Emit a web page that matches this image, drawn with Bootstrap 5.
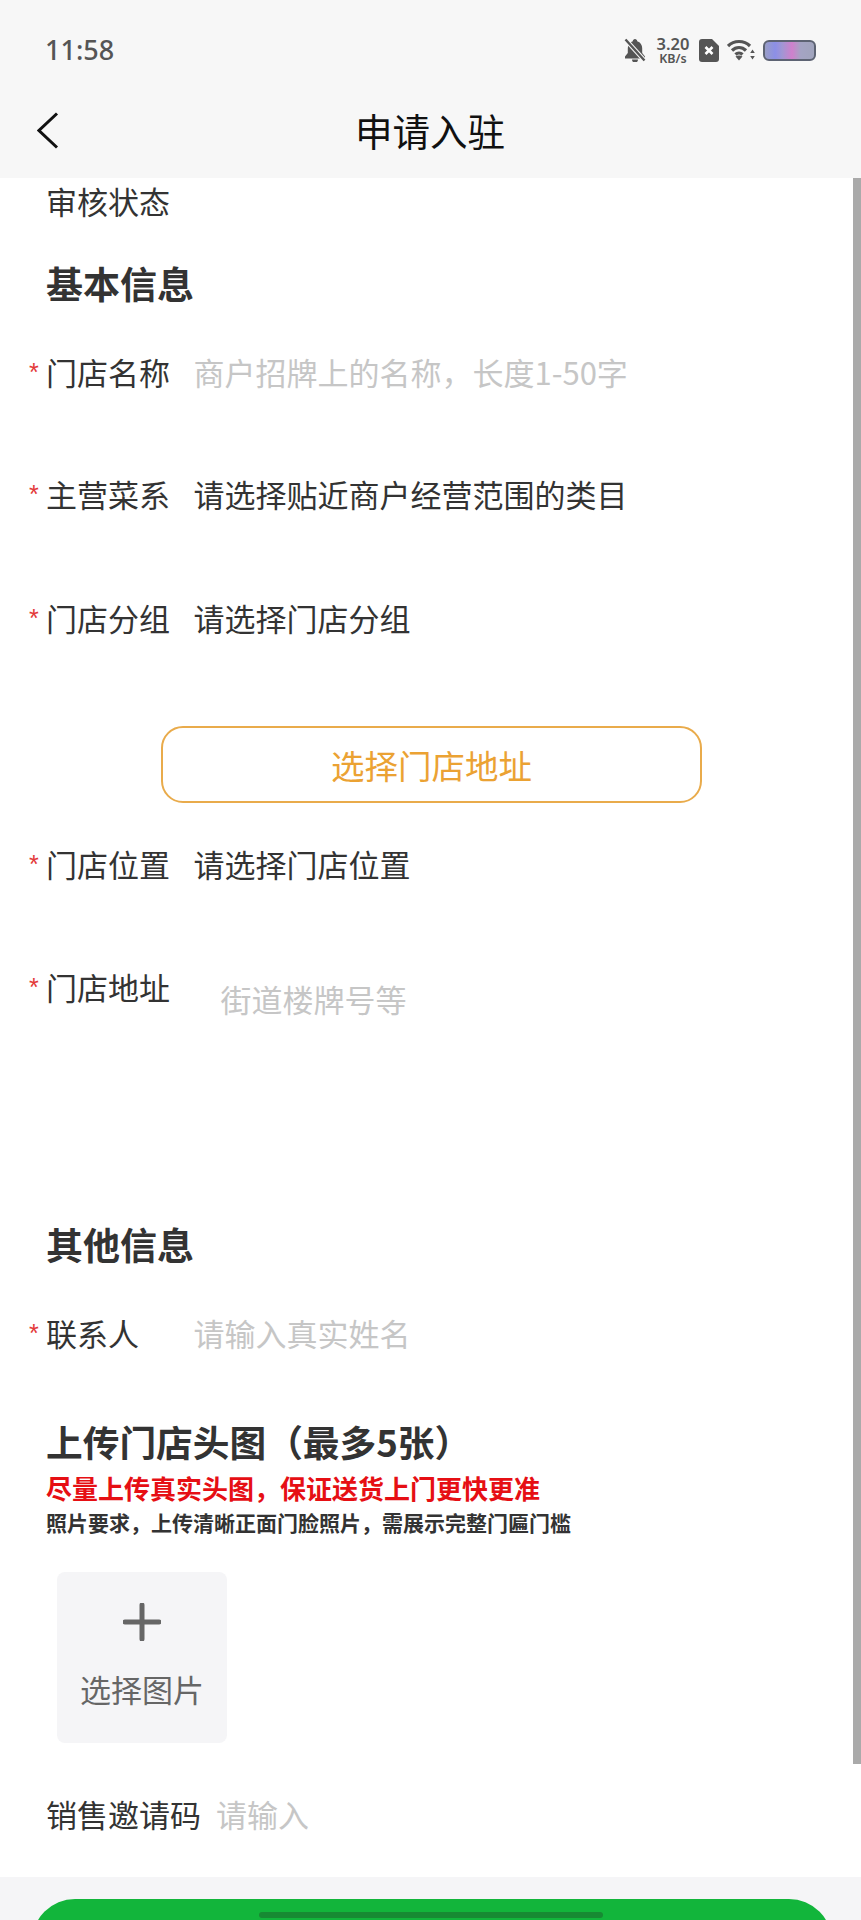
<!DOCTYPE html>
<html lang="zh">
<head>
<meta charset="utf-8">
<link href="https://cdn.jsdelivr.net/npm/bootstrap@5.3.0/dist/css/bootstrap.min.css" rel="stylesheet">
<style>
html,body{margin:0;background:#fff}
.screen{width:861px;height:1920px;position:relative;overflow:hidden;background:#fff;font-family:"Noto Sans CJK SC","Liberation Sans",sans-serif;color:#333;font-size:31px;line-height:40px}
.top-area{height:178px;background:#f7f7f7}
.status{height:100px;padding:0 45px 0 45px}
.clock{font-family:"Noto Sans","Liberation Sans",sans-serif;font-size:27px;font-weight:500;color:#555;line-height:100px}
.speed{font-family:"Noto Sans","Liberation Sans",sans-serif;color:#555;font-weight:600;text-align:center;width:38px;margin:0 7px}
.speed b{display:block;font-size:16.500px;line-height:17px;font-weight:600}
.speed i{display:block;font-style:normal;font-size:12.500px;line-height:13px}
.nav-line{height:60px;padding-left:37px;position:relative}
.page-title{font-size:37.500px;color:#111;line-height:56px;width:100%;text-align:center;margin-left:-41px}
.sbar{position:absolute;left:853px;top:178px;width:8px;height:1586px;background:#aaa}
.h-line{padding-left:46px;height:44px;font-size:37px;font-weight:700;color:#333;line-height:42px}
.h-mid{font-weight:600;font-size:36.700px;line-height:40px}
.f-row{height:44px;padding-left:29px;display:flex;white-space:nowrap}
.star{width:17px;color:#e33a3a;font-family:"Liberation Sans",sans-serif;font-size:25px;line-height:40px;flex:none}
.lbl{width:147.500px;flex:none}
.ph{color:#c6c6c6}
.pick-btn{margin-left:161px;width:541px;height:77px;border:2px solid #e9ab4b;border-radius:22px;color:#eba233;line-height:74px;font-size:33.500px;text-align:center}
.red-note{padding-left:46px;height:30px;font-size:26px;font-weight:700;color:#e60f14;line-height:26px;white-space:nowrap}
.blk-note{padding-left:46px;height:30px;font-size:21px;font-weight:600;color:#333;line-height:26px;white-space:nowrap}
.tile{margin-left:57px;width:170px;height:171px;background:#f5f5f7;border-radius:8px;color:#666;padding-bottom:4px}
.foot{height:43px;background:#f5f5f7;padding:22px 29px 0 32px;position:relative}
.go{height:60px;background:#12b53b;border-radius:43px 43px 0 0}
.home-bar{position:absolute;left:259px;top:35px;width:344px;height:6px;border-radius:3px;background:#178a33}
.mt3x{margin-top:3px}.mt37{margin-top:37px}.mt46{margin-top:46px}.mt78{margin-top:78px}.mt80{margin-top:80px}.mt84{margin-top:84px}.mt41{margin-top:41px}.mt79{margin-top:79px}.mt201{margin-top:201px}.mt64{margin-top:64px}.mt10{margin-top:10px}.mt4x{margin-top:4px}.mt33{margin-top:33px}.mt51{margin-top:51px}.mt39{margin-top:39px}
.addr{height:55px}
.addr-val{padding:12px 0 0 27px}
.tile-text{margin-top:28px}
.lbl-wide{width:170px;flex:none}
</style>
</head>
<body>
<div class="screen">
  <div class="top-area">
    <div class="status d-flex align-items-center justify-content-between">
      <span class="clock">11:58</span>
      <div class="d-flex align-items-center">
        <svg width="24" height="24" viewBox="0 0 24 24"><path d="M12 1c-1.200 0-2.200 1-2.200 2.200-3.300 1-5 3.800-5 7V15L2 18.500V20.500h20v-2L19.200 15v-4.800c0-3.200-1.700-6-5-7C14.200 2 13.200 1 12 1zM9 21.500h6a3 3 0 0 1-6 0z" fill="#555"/><path d="M2 1l20 22" stroke="#f7f7f7" stroke-width="4.500"/><path d="M2.500 1.500l19 21" stroke="#555" stroke-width="2.400"/></svg>
        <div class="speed"><b>3.20</b><i>KB/s</i></div>
        <svg width="20" height="23" viewBox="0 0 20 23"><path d="M3 0h10l7 7v13a3 3 0 0 1-3 3H3a3 3 0 0 1-3-3V3a3 3 0 0 1 3-3z" fill="#555"/><path d="M6.500 8l7 7M13.500 8l-7 7" stroke="#fff" stroke-width="2.600"/></svg>
        <svg class="ms-2" width="28" height="22" viewBox="0 0 28 22" fill="none" stroke="#555" stroke-width="3.200"><path d="M1 7c6-6 16-6 22 0"/><path d="M5 11.500c4-4 10-4 14 0"/><path d="M8.500 15.500c2-2 5-2 7 0"/><path d="M12 21.500l-3.500-4c2.300-1.500 4.700-1.500 7 0z" fill="#555" stroke="none"/><path d="M25.500 10.500l-2.300 3.500h4.600zM25.500 20.500l-2.300-3.500h4.600z" fill="#555" stroke="none"/></svg>
        <svg class="ms-2" width="53" height="21" viewBox="0 0 53 21"><defs><linearGradient id="bt"><stop offset="0" stop-color="#9a9fc4"/><stop offset=".22" stop-color="#8c8fe6"/><stop offset=".36" stop-color="#a296d4"/><stop offset=".55" stop-color="#cf80cc"/><stop offset=".72" stop-color="#a4a4c4"/><stop offset="1" stop-color="#a0a4bc"/></linearGradient></defs><rect x="1" y="1" width="51" height="19" rx="5" fill="url(#bt)" stroke="#5d6373" stroke-width="2"/></svg>
      </div>
    </div>
    <div class="nav-line d-flex align-items-center">
      <svg width="22" height="37" viewBox="0 0 22 37" fill="none" stroke="#111" stroke-width="3"><path d="M20 1.500L2 18.500l18 17"/></svg>
      <div class="page-title">申请入驻</div>
    </div>
  </div>

  <div class="f-row mt3x"><span class="star"></span><span class="lbl">审核状态</span></div>
  <div class="h-line mt37">基本信息</div>
  <div class="f-row mt46"><span class="star">*</span><span class="lbl">门店名称</span><span class="ph">商户招牌上的名称，长度1-50字</span></div>
  <div class="f-row mt78"><span class="star">*</span><span class="lbl">主营菜系</span><span>请选择贴近商户经营范围的类目</span></div>
  <div class="f-row mt80"><span class="star">*</span><span class="lbl">门店分组</span><span>请选择门店分组</span></div>
  <div class="pick-btn mt84">选择门店地址</div>
  <div class="f-row mt41"><span class="star">*</span><span class="lbl">门店位置</span><span>请选择门店位置</span></div>
  <div class="f-row addr mt79"><span class="star">*</span><span class="lbl">门店地址</span><span class="ph addr-val">街道楼牌号等</span></div>
  <div class="h-line mt201">其他信息</div>
  <div class="f-row mt46"><span class="star">*</span><span class="lbl">联系人</span><span class="ph">请输入真实姓名</span></div>
  <div class="h-line h-mid mt64">上传门店头图（最多5张）</div>
  <div class="red-note mt10">尽量上传真实头图，保证送货上门更快更准</div>
  <div class="blk-note mt4x">照片要求，上传清晰正面门脸照片，需展示完整门匾门槛</div>
  <div class="tile mt33 d-flex flex-column align-items-center justify-content-center">
    <svg width="38" height="38" viewBox="0 0 38 38"><path d="M19 2v34M2 19h34" stroke="#666" stroke-width="5" stroke-linecap="round"/></svg>
    <div class="tile-text">选择图片</div>
  </div>
  <div class="f-row mt51"><span class="star"></span><span class="lbl-wide">销售邀请码</span><span class="ph">请输入</span></div>
  <div class="foot mt39"><div class="go"></div><div class="home-bar"></div></div>
  <div class="sbar"></div>
</div>
<script src="https://cdn.jsdelivr.net/npm/bootstrap@5.3.0/dist/js/bootstrap.bundle.min.js"></script>
</body>
</html>
